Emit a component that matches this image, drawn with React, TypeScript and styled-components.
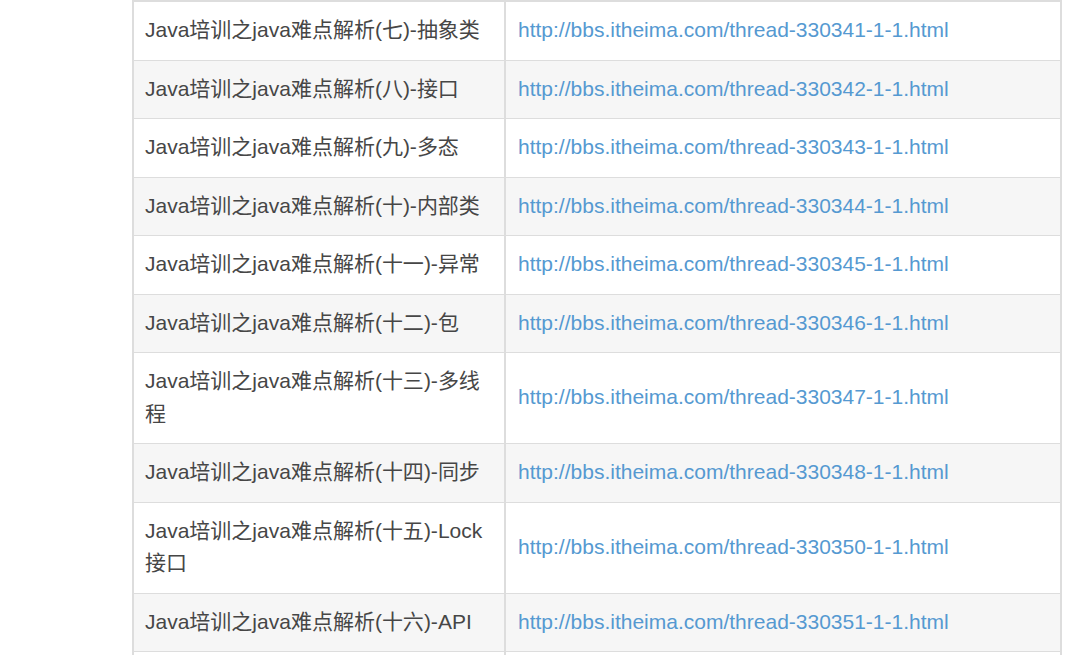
import React from 'react';
import styled, { createGlobalStyle } from 'styled-components';

const GlobalStyle = createGlobalStyle`
  html, body {
    margin: 0;
    padding: 0;
    background: #fff;
    overflow: hidden;
  }
  body {
    font-family: "Liberation Sans", "Noto Sans CJK SC", Arial, sans-serif;
  }
`;

const Page = styled.div`
  padding-left: 132px;
  height: 655px;
  overflow: hidden;
`;

const Table = styled.table`
  width: 930px;
  border-collapse: separate;
  border-spacing: 0;
  border-top: 2px solid #dddddd;
  border-left: 2px solid #dddddd;
  table-layout: fixed;
  font-size: 21px;
  line-height: 32.5px;
`;

const Row = styled.tr<{ striped: boolean }>`
  background: ${({ striped }) => (striped ? '#f6f6f6' : '#ffffff')};
`;

const Cell = styled.td`
  padding: 12px 12px 13px 12px;
  vertical-align: middle;
  border-right: 2px solid #dddddd;
  border-bottom: 1px solid #dddddd;
  text-align: left;
`;

const TitleCell = styled(Cell)`
  width: 347px;
  padding-left: 11px;
  color: #464646;
`;

const Link = styled.a`
  color: #5599d1;
  text-decoration: none;
`;

const rows = [
  { part: '七', topic: '抽象类', id: '330341' },
  { part: '八', topic: '接口', id: '330342' },
  { part: '九', topic: '多态', id: '330343' },
  { part: '十', topic: '内部类', id: '330344' },
  { part: '十一', topic: '异常', id: '330345' },
  { part: '十二', topic: '包', id: '330346' },
  { part: '十三', topic: '多线程', id: '330347' },
  { part: '十四', topic: '同步', id: '330348' },
  { part: '十五', topic: 'Lock接口', id: '330350' },
  { part: '十六', topic: 'API', id: '330351' },
  { part: '十七', topic: '集合', id: '330352' },
];

export default function App() {
  return (
    <>
      <GlobalStyle />
      <Page>
        <Table>
          <tbody>
            {rows.map((row, index) => {
              const url = `http://bbs.itheima.com/thread-${row.id}-1-1.html`;
              return (
                <Row key={row.id} striped={index % 2 === 1}>
                  <TitleCell>
                    Java培训之java难点解析({row.part})-{row.topic}
                  </TitleCell>
                  <Cell>
                    <Link href={url}>{url}</Link>
                  </Cell>
                </Row>
              );
            })}
          </tbody>
        </Table>
      </Page>
    </>
  );
}
